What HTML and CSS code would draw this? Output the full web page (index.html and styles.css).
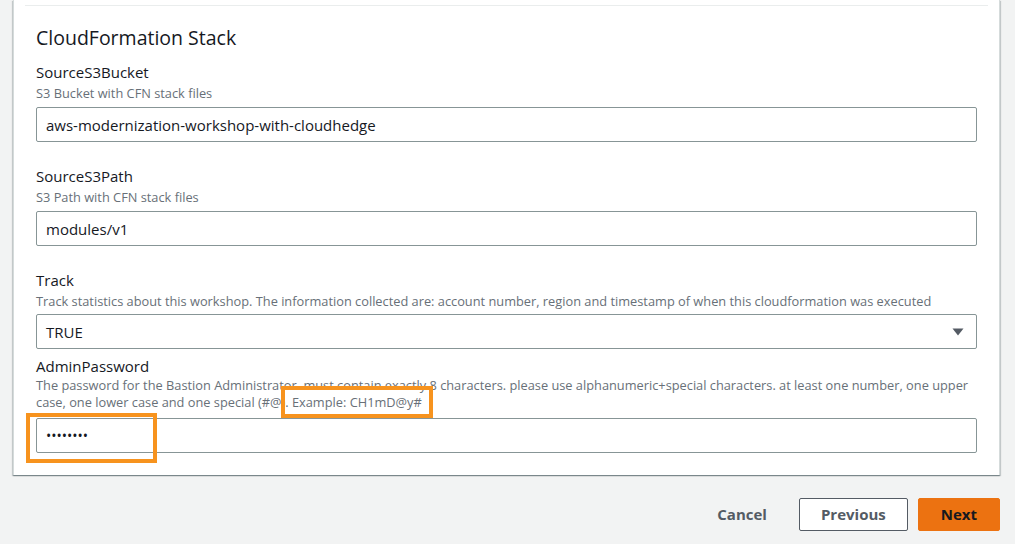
FILE: index.html
```html
<!DOCTYPE html>
<html lang="en">
<head>
<meta charset="utf-8">
<title>CloudFormation Stack</title>
<link rel="stylesheet" href="styles.css">
</head>
<body>
<main class="page">
  <section class="card">
    <div class="prev-section"></div>
    <div class="card-body">
      <h2 class="card-title">CloudFormation Stack</h2>

      <div class="field field-spaced">
        <div class="label">SourceS3Bucket</div>
        <div class="desc">S3 Bucket with CFN stack files</div>
        <div class="input">aws-modernization-workshop-with-cloudhedge</div>
      </div>

      <div class="field field-spaced">
        <div class="label">SourceS3Path</div>
        <div class="desc">S3 Path with CFN stack files</div>
        <div class="input">modules/v1</div>
      </div>

      <div class="field field-track">
        <div class="label">Track</div>
        <div class="desc">Track statistics about this workshop. The information collected are: account number, region and timestamp of when this cloudformation was executed</div>
        <div class="input select">
          <span>TRUE</span>
          <svg class="caret" width="12" height="8" viewBox="0 0 12 8" aria-hidden="true"><path d="M0.5 0.5 H11.5 L6 7.5 Z" fill="#545b64"/></svg>
        </div>
      </div>

      <div class="field field-password">
        <div class="label">AdminPassword</div>
        <div class="desc">The password for the Bastion Administrator. must contain exactly 8 characters. please use alphanumeric+special characters. at least one number, one upper case, one lower case and one special (#@)<span class="hl">. Example: CH1mD@y#</span></div>
        <div class="input-wrap">
          <div class="input password">••••••••</div>
          <span class="hl-box"></span>
        </div>
      </div>
    </div>
  </section>

  <div class="actions">
    <button class="btn btn-link">Cancel</button>
    <button class="btn btn-normal">Previous</button>
    <button class="btn btn-primary">Next</button>
  </div>
</main>
</body>
</html>
```

FILE: styles.css
```css
* { box-sizing: border-box; }

html, body {
  margin: 0;
  padding: 0;
  background: #f2f3f3;
}

body {
  font-family: "Open Sans", "Noto Sans", Arial, sans-serif;
  color: #16191f;
  font-size: 15px;
}

.page {
  padding: 0 15px 0 13px;
}

.card {
  background: #fff;
  border-left: 1px solid #d5dbdb;
  border-right: 1px solid #d5dbdb;
  box-shadow: 0 1px 1px 0 rgba(0, 28, 36, 0.3), 1px 1px 1px 0 rgba(0, 28, 36, 0.15), -1px 1px 1px 0 rgba(0, 28, 36, 0.15);
}

.prev-section {
  height: 6px;
  margin: 0 11px;
  border-bottom: 1px solid #eaeded;
}

.card-body {
  padding: 19px 22px 22px 22px;
}

.card-title {
  margin: 0;
  font-size: 19.5px;
  line-height: 25px;
  font-weight: 400;
  color: #16191f;
}

.field {
  margin-top: 12px;
}

.field-spaced + .field {
  margin-top: 24px;
}

.field-password {
  margin-top: 7px;
}

.label {
  font-size: 15px;
  line-height: 21px;
  color: #16191f;
}

.desc {
  font-size: 12.8px;
  line-height: 17px;
  color: #687078;
  margin-top: 2px;
  margin-bottom: 5px;
}

.field-track .desc {
  margin-bottom: 4px;
}

.field-password .desc {
  margin-top: 0;
  margin-bottom: 7px;
}

.input {
  height: 35px;
  border: 1px solid #879596;
  border-radius: 2px;
  padding: 0 9px;
  display: flex;
  align-items: center;
  font-size: 15px;
  color: #16191f;
  background: #fff;
}

.select {
  justify-content: space-between;
  padding-right: 12px;
}

.caret {
  display: block;
}

.password {
  font-size: 14px;
}

.hl {
  position: relative;
}

.hl::after {
  content: "";
  position: absolute;
  left: -4px;
  right: -11px;
  top: -7px;
  bottom: -7px;
  border: 4px solid #f7931e;
}

.input-wrap {
  position: relative;
}

.hl-box {
  position: absolute;
  left: -10px;
  top: -5px;
  width: 131px;
  height: 50px;
  border: 4px solid #f7931e;
}

.actions {
  display: flex;
  justify-content: flex-end;
  align-items: center;
  gap: 10px;
  margin-top: 23px;
}

.btn {
  font-family: inherit;
  font-size: 15px;
  font-weight: 700;
  line-height: 23px;
  padding: 4px 21px;
  border-radius: 2px;
  border: 1px solid transparent;
  cursor: pointer;
}

.btn-link {
  background: transparent;
  color: #545b64;
}

.btn-normal {
  background: #fff;
  border-color: #545b64;
  color: #545b64;
}

.btn-primary {
  background: #ec7211;
  border-color: #ec7211;
  color: #16191f;
  padding: 4px 22px;
}
```
